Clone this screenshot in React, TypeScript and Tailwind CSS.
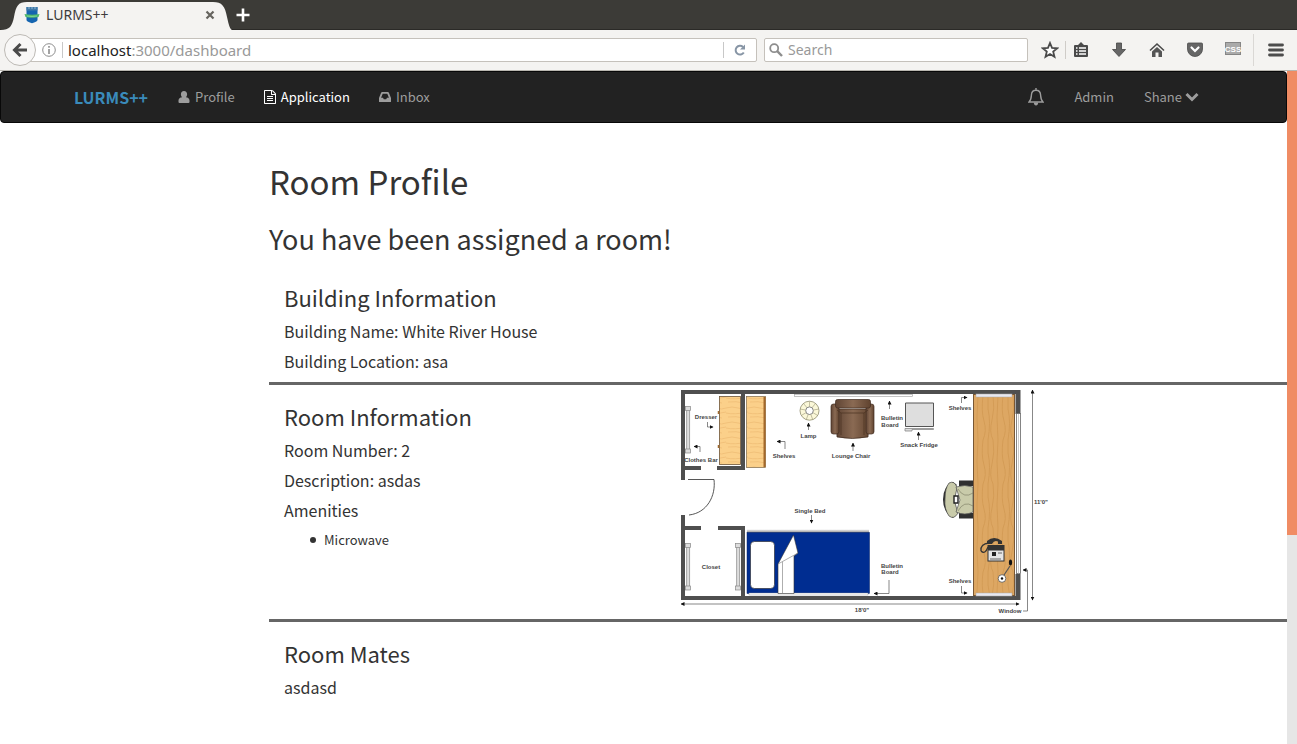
import React from "react";

function BrowserIcon({ label, children }: { label: string; children: React.ReactNode }) {
  return (
    <button type="button" aria-label={label} className="flex h-6 w-6 shrink-0 items-center justify-center">
      <svg viewBox="0 0 18 18" className="h-[18px] w-[18px]">{children}</svg>
    </button>
  );
}

function TabStrip() {
  return (
    <div className="flex h-[30px] items-center border-b border-[#2b2a27] bg-[#3c3b37]">
      <div className="relative flex h-[30px] w-[232px] items-center">
        <svg viewBox="0 0 232 30" className="absolute inset-0 h-[30px] w-[232px]">
          <path d="M0 30C10 30 12 26 14 17C16 6 18 2 27 2H213C222 2 225 6 227 17C229 26 230 29 232 30Z" fill="#f4f3f1" />
        </svg>
        <div className="relative flex w-full items-center pl-6 pr-[14px]">
          <svg viewBox="0 0 16 18" className="h-[18px] w-4 shrink-0">
            <path d="M2.500 1H13.500V14C13.500 15.500 11 16 8 17.300C5 16 2.500 15.500 2.500 14Z" fill="#1565b0" />
            <path d="M2.500 1H13.500V4.500H2.500Z" fill="#3f78a6" />
            <path d="M5 1V3M8 1V3M11 1V3" stroke="#8fb7d5" strokeWidth="1" />
            <path d="M.5 8C5 9 11 9 15.500 8L14.500 11C11 12 5 12 1.500 11Z" fill="#4fb86c" />
            <path d="M3 10Q8 11 13 10" stroke="#7fd596" fill="none" strokeWidth="1" />
          </svg>
          <span className="ml-[6px] text-[14px] leading-5 text-[#3c3c3c]">LURMS++</span>
          <button type="button" aria-label="Close tab" className="ml-auto flex h-4 w-4 items-center justify-center">
            <svg viewBox="0 0 10 10" className="h-[10px] w-[10px]"><path d="M1.500 1.500L8.500 8.500M8.500 1.500L1.500 8.500" stroke="#66645f" strokeWidth="2.200" /></svg>
          </button>
        </div>
      </div>
      <button type="button" aria-label="New tab" className="ml-[3px] flex h-4 w-4 items-center justify-center">
        <svg viewBox="0 0 14 14" className="h-[14px] w-[14px]"><path d="M7 .5V13.500M.5 7H13.500" stroke="#fff" strokeWidth="2.600" /></svg>
      </button>
    </div>
  );
}

function Toolbar() {
  return (
    <div className="flex h-[41px] items-center border-b border-[#b9b6b0] bg-[#f4f3f1] pl-1 pr-[9px]">
      <button type="button" aria-label="Back" className="z-10 flex h-8 w-8 shrink-0 items-center justify-center rounded-full border border-[#bdbab5] bg-[#f8f7f6]">
        <svg viewBox="0 0 16 16" className="h-4 w-4"><path d="M8.500 2L2.500 8L8.500 14M3 8H15" fill="none" stroke="#4a4a4a" strokeWidth="3" /></svg>
      </button>
      <div className="-ml-2 flex h-6 min-w-0 flex-1 items-center rounded-r-[2px] border border-[#c5c1bb] bg-white pl-[13px]">
        <svg viewBox="0 0 14 14" className="h-[14px] w-[14px] shrink-0">
          <circle cx="7" cy="7" r="6.300" fill="none" stroke="#8d8d8d" />
          <path d="M7 6V11M7 3V4.700" stroke="#8d8d8d" strokeWidth="1.600" />
        </svg>
        <div className="ml-[6px] h-4 w-px bg-[#c8c8c8]" />
        <div role="textbox" aria-label="Address" tabIndex={0} className="ml-[5px] flex-1 text-[15px] leading-5 text-[#999]"><span className="text-[#222]">localhost</span>:3000/dashboard</div>
        <button type="button" aria-label="Reload" className="flex h-4 w-[33px] items-center justify-center border-l border-[#c8c8c8]">
          <svg viewBox="0 0 12 12" className="h-3 w-3"><path d="M9.800 8.500A4.400 4.400 0 1 1 9 2.900" fill="none" stroke="#8795a5" strokeWidth="2" /><path d="M11 .5V5.500H6Z" fill="#8795a5" /></svg>
        </button>
      </div>
      <div className="ml-[7px] flex h-6 w-[264px] items-center rounded-[2px] border border-[#c5c1bb] bg-white pl-1">
        <svg viewBox="0 0 14 14" className="h-[14px] w-[14px] shrink-0"><circle cx="5.200" cy="5.200" r="4" fill="none" stroke="#8d8d8d" strokeWidth="1.800" /><path d="M8.200 8.200L13 13" stroke="#8d8d8d" strokeWidth="2.400" /></svg>
        <input aria-label="Search" placeholder="Search" className="ml-[5px] w-full bg-transparent text-[14px] leading-5 outline-none placeholder:text-[#999]" />
      </div>
      <div className="ml-[10px] flex items-center">
        <BrowserIcon label="Bookmark">
          <path d="M9 2L11 6.900L16.200 7.300L12.200 10.600L13.500 15.800L9 13L4.500 15.800L5.800 10.600L1.800 7.300L7 6.900Z" fill="#fff" stroke="#4a4a4a" strokeWidth="1.800" />
        </BrowserIcon>
        <div className="ml-[3px] h-[18px] w-px bg-[#cfccc8]" />
        <div className="ml-[3px] flex gap-[14px]">
          <BrowserIcon label="Bookmarks list">
            <path d="M3 4H6L9 1L12 4H15Q16 4 16 5V15Q16 16 15 16H3Q2 16 2 15V5Q2 4 3 4Z" fill="#4a4a4a" />
            <path d="M4 7H5.500M7 7H14M4 10H5.500M7 10H14M4 13H5.500M7 13H14" stroke="#fff" strokeWidth="1.600" />
          </BrowserIcon>
          <BrowserIcon label="Downloads"><path d="M6.500 2H11.500V8.500H15.500L9 15.500L2.500 8.500H6.500Z" fill="#666" stroke="#444" strokeWidth=".8" /></BrowserIcon>
          <BrowserIcon label="Home">
            <path d="M2 9.500L9 3L16 9.500" fill="none" stroke="#4a4a4a" strokeWidth="1.600" />
            <path d="M4 10.500L9 6L14 10.500V16H10.500V11.500H7.500V16H4Z" fill="#555" />
          </BrowserIcon>
          <BrowserIcon label="Pocket">
            <path d="M2.500 2H15.500Q16.500 2 16.500 3V8A7.500 7.500 0 0 1 1.500 8V3Q1.500 2 2.500 2Z" fill="#666" stroke="#4c4c4c" strokeWidth=".8" />
            <path d="M5.500 6.500L9 10L12.500 6.500" fill="none" stroke="#fff" strokeWidth="2.200" strokeLinecap="round" />
          </BrowserIcon>
          <BrowserIcon label="CSS">
            <rect x="1.500" y="1.500" width="15" height="12" fill="#aaa" stroke="#858585" />
            <text x="9" y="10.500" textAnchor="middle" fill="#fff" fontFamily="Liberation Sans Narrow, Liberation Sans" fontWeight="700" fontSize="8">CSS</text>
          </BrowserIcon>
        </div>
        <div className="ml-2 h-8 w-px bg-[#dad8d5]" />
        <div className="ml-[10px]">
          <BrowserIcon label="Menu"><path d="M2.500 4H15.500M2.500 9H15.500M2.500 14H15.500" stroke="#4c4c4c" strokeWidth="2.800" strokeLinecap="round" /></BrowserIcon>
        </div>
      </div>
    </div>
  );
}

function NavBar() {
  return (
    <nav className="flex h-[52px] items-center rounded-[4px] border border-[#080808] bg-[#222] pl-[73px] pr-[87px] text-[13px] leading-5 text-[#9d9d9d]">
      <a href="#home" className="text-[16px] font-bold text-[#3a8bbb]">LURMS++</a>
      <a href="#profile" className="ml-[30px] flex items-center gap-[5px]">
        <svg viewBox="0 0 12 12" className="h-3 w-3"><path d="M6 0C8 0 9.100 1.400 9.100 3.200C9.100 4.600 8.500 5.600 7.900 6.200C10 6.200 11.500 7.500 11.500 9.500V11Q11.500 12 10.500 12H1.500Q.5 12 .5 11V9.500C.5 7.500 2 6.200 4.100 6.200C3.500 5.600 2.900 4.600 2.900 3.200C2.900 1.400 4 0 6 0Z" fill="currentColor" /></svg>
        Profile
      </a>
      <a href="#application" className="ml-[29px] flex items-center gap-[5px] text-white">
        <svg viewBox="128 0 1536 1792" className="h-[14px] w-3"><path fill="currentColor" d="M1596 380q28 28 48 76t20 88v1152q0 40-28 68t-68 28h-1344q-40 0-68-28t-28-68v-1600q0-40 28-68t68-28h896q40 0 88 20t76 48zm-444-244v376h376q-10-29-22-41l-313-313q-12-12-41-22zm384 1528v-1024h-416q-40 0-68-28t-28-68v-416h-768v1536h1280zm-1024-864q0-14 9-23t23-9h704q14 0 23 9t9 23v64q0 14-9 23t-23 9h-704q-14 0-23-9t-9-23v-64zm736 224q14 0 23 9t9 23v64q0 14-9 23t-23 9h-704q-14 0-23-9t-9-23v-64q0-14 9-23t23-9h704zm0 256q14 0 23 9t9 23v64q0 14-9 23t-23 9h-704q-14 0-23-9t-9-23v-64q0-14 9-23t23-9h704z" /></svg>
        Application
      </a>
      <a href="#inbox" className="ml-[29px] flex items-center gap-[5px]">
        <svg viewBox="0 0 12 12" className="h-3 w-3"><path fillRule="evenodd" fill="currentColor" d="M3.200 1H8.800Q9.600 1 9.900 1.700L12 7V10.500Q12 11 11.500 11H.5Q0 11 0 10.500V7L2.100 1.700Q2.400 1 3.200 1ZM3.700 2.700L2.100 6.800H4L4.800 8.300H7.200L8 6.800H9.900L8.300 2.700Z" /></svg>
        Inbox
      </a>
      <div className="ml-auto flex items-center gap-[30px]">
        <button type="button" aria-label="Notifications" className="h-[18px] w-4">
          <svg viewBox="0 0 16 18" className="h-[18px] w-4"><path d="M1 14C3.200 12 3.200 10 3.400 7C3.600 4 5.300 2.200 8 2.200C10.700 2.200 12.400 4 12.600 7C12.800 10 12.800 12 15 14ZM8 0V2.200" fill="none" stroke="currentColor" strokeWidth="1.400" /><path d="M5.800 14.500H10.200Q10 17.500 8 17.500Q6 17.500 5.800 14.500Z" fill="currentColor" /></svg>
        </button>
        <a href="#admin">Admin</a>
        <a href="#shane" className="flex items-center gap-[3px]">Shane
          <svg viewBox="0 0 14 10" className="h-[10px] w-[14px]"><path d="M1.500 2L7 7.500L12.500 2" fill="none" stroke="currentColor" strokeWidth="3" /></svg>
        </a>
      </div>
    </nav>
  );
}

function Label({ x, y, children }: { x: number; y: number; children: string }) {
  return <text x={x} y={y} textAnchor="middle" fontFamily="Liberation Sans" fontWeight="700" fontSize="6" fill="#444">{children}</text>;
}

function FloorPlan() {
  const spokes = [0, 1, 2, 3, 4, 5, 6, 7, 8];
  return (
    <svg viewBox="680 388 370 228" className="h-[228px] w-[370px]" role="img" aria-label="Room floor plan">
      <defs>
        <pattern id="lightWood" width="22" height="15" patternUnits="userSpaceOnUse">
          <rect width="22" height="15" fill="#fbd08a" />
          <path d="M0 3Q6 1 12 3T22 3M0 8Q8 10 22 7M2 12Q10 11 18 13" fill="none" stroke="#efbd75" strokeWidth=".8" />
        </pattern>
        <pattern id="darkWood" width="20" height="44" patternUnits="userSpaceOnUse">
          <rect width="20" height="44" fill="#dda763" />
          <path d="M3 0Q1 15 4 25T3 44M8 0V13Q11 26 8 44M13 0Q15 12 12 24T13 44M18 0Q16 20 18 44" fill="none" stroke="#d19852" strokeWidth=".8" />
        </pattern>
        <linearGradient id="leather" x2="1"><stop stopColor="#5f4434" /><stop offset=".5" stopColor="#8a6a53" /><stop offset="1" stopColor="#60432f" /></linearGradient>
        <linearGradient id="shade" x2="0" y2="1"><stop stopColor="#eee" /><stop offset="1" stopColor="#888" /></linearGradient>
        <marker id="arrow" viewBox="0 0 4 4" refX="3.500" refY="2" markerWidth="4" markerHeight="4" markerUnits="userSpaceOnUse" orient="auto-start-reverse"><path d="M0 0L4 2L0 4Z" fill="#111" /></marker>
      </defs>

      <path d="M683 480V392H1018V414M1018 574V598H683V515M683 468H701M717 468H743V392M683 528H701M718 528H743V597" fill="none" stroke="#4f4f4f" strokeWidth="4" />
      <path d="M1018 390V414M1018 574V600" stroke="#4f4f4f" strokeWidth="5" />
      <rect x="1016.500" y="413.500" width="4" height="160" fill="#fff" stroke="#666" strokeWidth=".8" />
      <path d="M1018.500 414V574" stroke="#aaa" strokeWidth=".6" />
      <path d="M688 479.500H714C716 496 707 513 689 515" fill="none" stroke="#444" strokeWidth=".9" />

      {[[688, 408, 43], [688, 545, 43], [738, 545, 43]].map(([x, y, h]) => (
        <g key={x + "-" + y} fill="#ddd" stroke="#888" strokeWidth=".7">
          <rect x={x - 1.300} y={y} width="3" height={h} />
          <rect x={x - 2.500} y={y - 1.500} width="5" height="4" /><rect x={x - 2.500} y={y + h - 2} width="5" height="4" />
        </g>
      ))}

      <rect x="719.500" y="396.500" width="21" height="68" fill="url(#lightWood)" stroke="#6d5437" strokeWidth=".8" />
      <path d="M718.500 411V414M718.500 445V448" stroke="#a16b31" strokeWidth="1.500" />
      <rect x="746.500" y="396.500" width="19" height="71" fill="url(#lightWood)" stroke="#7c6748" strokeWidth=".7" />
      <rect x="763.500" y="397" width="2" height="70" fill="#a4682b" />
      <rect x="794.500" y="394.500" width="118" height="2" fill="#fff" stroke="#aaa" strokeWidth=".7" />

      <circle cx="809.500" cy="410.700" r="9.500" fill="#fbf8d9" stroke="#8e8b6d" strokeWidth=".8" />
      {spokes.map((i) => <path key={i} d="M809.500 401.500V406.500" stroke="#8e8b6d" strokeWidth=".5" transform={`rotate(${i * 40} 809.500 410.700)`} />)}
      <circle cx="809.500" cy="410.700" r="3.800" fill="#fff" stroke="#666" strokeWidth=".8" />

      <g fill="url(#leather)" stroke="#3f2b20" strokeWidth=".7">
        <path d="M836 409H870L868 437Q852 440 837 437Z" />
        <rect x="831" y="404" width="8" height="30" rx="2.500" /><rect x="866" y="404" width="8" height="30" rx="2.500" />
        <rect x="835.500" y="399.500" width="35" height="8.500" rx="2" />
      </g>
      <path d="M837 410L841 413V435M868 410L864 413V435M841 413H864" fill="none" stroke="#49301f" strokeWidth=".7" />

      <path d="M905.500 403H933.500V426.500H905.500Z" fill="#dedede" stroke="#555" strokeWidth="1" />
      <path d="M905 428.500H933.500V429.500H912V431H905Z" fill="#ddd" stroke="#888" strokeWidth=".8" />

      <rect x="973.500" y="394.500" width="41" height="201" fill="url(#darkWood)" stroke="#785735" strokeWidth="1" />
      <rect x="976" y="394" width="36" height="3" fill="#e8e8f0" stroke="#aaa" strokeWidth=".5" /><rect x="976" y="593" width="36" height="3" fill="#e8e8f0" stroke="#aaa" strokeWidth=".5" />

      <path d="M959 480.500H973V486H959ZM959 513H973V518.500H959Z" fill="#303030" />
      <path d="M953 482Q943 486 943 499.500Q943 512 953 518L956 514Q949 507 950 499Q950 490 957 485Z" fill="#303030" />
      <path d="M949 483Q955 480 957 488L955 497V503L958 513Q954 520 949 516Q944 509 945 499Q945 488 949 483Z" fill="#c9cbaa" stroke="#444" strokeWidth=".7" />
      <path d="M956 487Q965 484 973 487V512Q965 516 956 512L960 500Z" fill="#c9cbaa" stroke="#555" strokeWidth=".7" />
      <path d="M954 496H958V503H954Z" fill="#fff" stroke="#222" strokeWidth="1.400" />
      <path d="M958 489Q964 499 973 493M958 511Q964 500 973 506" fill="none" stroke="#77775e" strokeWidth=".6" />

      <rect x="747" y="529.500" width="122" height="3.500" fill="url(#shade)" />
      <rect x="747" y="532.500" width="122.500" height="61" fill="#002d91" stroke="#001e65" strokeWidth=".5" />
      <rect x="749" y="593" width="119" height="2" fill="#fff" stroke="#888" strokeWidth=".4" />
      <rect x="750.500" y="541.500" width="24" height="47" rx="4" fill="#fff" stroke="#222" strokeWidth=".6" />
      <path d="M778 564L793.500 535L798 553L794 556V593.500H778Z" fill="#fff" stroke="#333" strokeWidth=".6" />
      <path d="M778 564L798 553M782.500 562V593" fill="none" stroke="#777" strokeWidth=".6" />

      <path d="M981 551Q980 544 989 543" fill="none" stroke="#333" strokeWidth="1.300" />
      <path d="M987 544V541Q994 535 1002 541V544H998V541.500Q994 540 992 544Z" fill="#333" />
      <path d="M981 551Q985 555 988 547" fill="none" stroke="#333" strokeWidth="1.300" />
      <rect x="988" y="545.500" width="16" height="15.500" fill="#e5e5e5" stroke="#333" strokeWidth="1" />
      <rect x="988" y="545.500" width="16" height="5" fill="#333" /><rect x="992" y="552" width="4" height="4" fill="#222" /><path d="M998 553H1002M990 559H1001" stroke="#666" strokeWidth="1" />
      <path d="M1002 578L1010 566" stroke="#555" strokeWidth="1.200" /><circle cx="1002" cy="578.500" r="3.800" fill="#fff" stroke="#555" strokeWidth=".8" /><circle cx="1002" cy="578.500" r="1.200" fill="#111" /><ellipse cx="1010.500" cy="562.500" rx="1.600" ry="3" fill="#111" />

      <g fill="none" stroke="#555" strokeWidth=".7">
        <path d="M707.500 422V427H713" markerEnd="url(#arrow)" /><path d="M700 452V446.500H694" markerEnd="url(#arrow)" />
        <path d="M785 449V441.500H777" markerEnd="url(#arrow)" /><path d="M808.500 430V423" markerEnd="url(#arrow)" />
        <path d="M853 451V443" markerEnd="url(#arrow)" /><path d="M889.500 409V401" markerEnd="url(#arrow)" />
        <path d="M918.500 440V432" markerEnd="url(#arrow)" /><path d="M961.500 403V397.500H967" markerEnd="url(#arrow)" />
        <path d="M811.500 515V523" markerEnd="url(#arrow)" /><path d="M889 580V593.500H874" markerEnd="url(#arrow)" />
        <path d="M961.500 586V593H967" markerEnd="url(#arrow)" /><path d="M1023 611H1027.500V570H1023" markerEnd="url(#arrow)" />
        <path d="M1032.500 390V600" markerStart="url(#arrow)" markerEnd="url(#arrow)" /><path d="M681 604H1019" markerStart="url(#arrow)" markerEnd="url(#arrow)" />
      </g>
      <Label x={706} y={419}>Dresser</Label><Label x={701} y={462}>Clothes Bar</Label><Label x={784} y={458}>Shelves</Label>
      <Label x={808.500} y={438}>Lamp</Label><Label x={851} y={457.500}>Lounge Chair</Label><Label x={892} y={420}>Bulletin</Label>
      <Label x={890} y={427}>Board</Label><Label x={919} y={447}>Snack Fridge</Label><Label x={960} y={410}>Shelves</Label>
      <Label x={810} y={512.500}>Single Bed</Label><Label x={711} y={568.500}>Closet</Label><Label x={892} y={567.500}>Bulletin</Label>
      <Label x={890} y={574}>Board</Label><Label x={960} y={583}>Shelves</Label><Label x={1010} y={613}>Window</Label>
      <Label x={862} y={611.500}>18'0"</Label><Label x={1041} y={504}>11'0"</Label>
    </svg>
  );
}

export default function App() {
  return (
    <div className="flex min-h-screen flex-col bg-white font-['Noto_Sans',sans-serif]">
      <TabStrip />
      <Toolbar />
      <div className="flex flex-1">
        <div className="min-w-0 flex-1 font-['Noto_Sans_CJK_SC',sans-serif] text-[#333]">
          <NavBar />
          <main className="pl-[269px] pt-[38px]">
            <h1 className="text-[33px] leading-10">Room Profile</h1>
            <h2 className="mt-[22px] text-[27px] leading-8">You have been assigned a room!</h2>
            <section className="mt-[11px] border-b-[3px] border-[#666] px-[15px] pb-[11px] pt-[18px]">
              <h3 className="text-[22px] leading-[26px]">Building Information</h3>
              <p className="mt-[11px] text-[16px] leading-5">Building Name: White River House</p>
              <p className="mt-[10px] text-[16px] leading-5">Building Location: asa</p>
            </section>
            <section className="flex border-b-[3px] border-[#666] pl-[15px]">
              <div className="w-[396px] shrink-0 pt-[18px]">
                <h3 className="text-[22px] leading-[26px]">Room Information</h3>
                <p className="mt-[11px] text-[16px] leading-5">Room Number: 2</p>
                <p className="mt-[10px] text-[16px] leading-5">Description: asdas</p>
                <p className="mt-[10px] text-[16px] leading-5">Amenities</p>
                <ul className="mt-[10px] pl-[26px] text-[13px] leading-5">
                  <li className="flex items-center gap-2 before:h-[6px] before:w-[6px] before:rounded-full before:bg-[#333]">Microwave</li>
                </ul>
              </div>
              <div className="pb-[3px] pt-[3px]"><FloorPlan /></div>
            </section>
            <section className="px-[15px] pt-[18px]">
              <h3 className="text-[22px] leading-[26px]">Room Mates</h3>
              <p className="mt-[11px] text-[16px] leading-5">asdasd</p>
            </section>
          </main>
        </div>
        <div className="flex w-[10px] shrink-0 flex-col bg-[#e6e6e6]"><div className="h-[69%] bg-[#f08c64]" /></div>
      </div>
    </div>
  );
}
